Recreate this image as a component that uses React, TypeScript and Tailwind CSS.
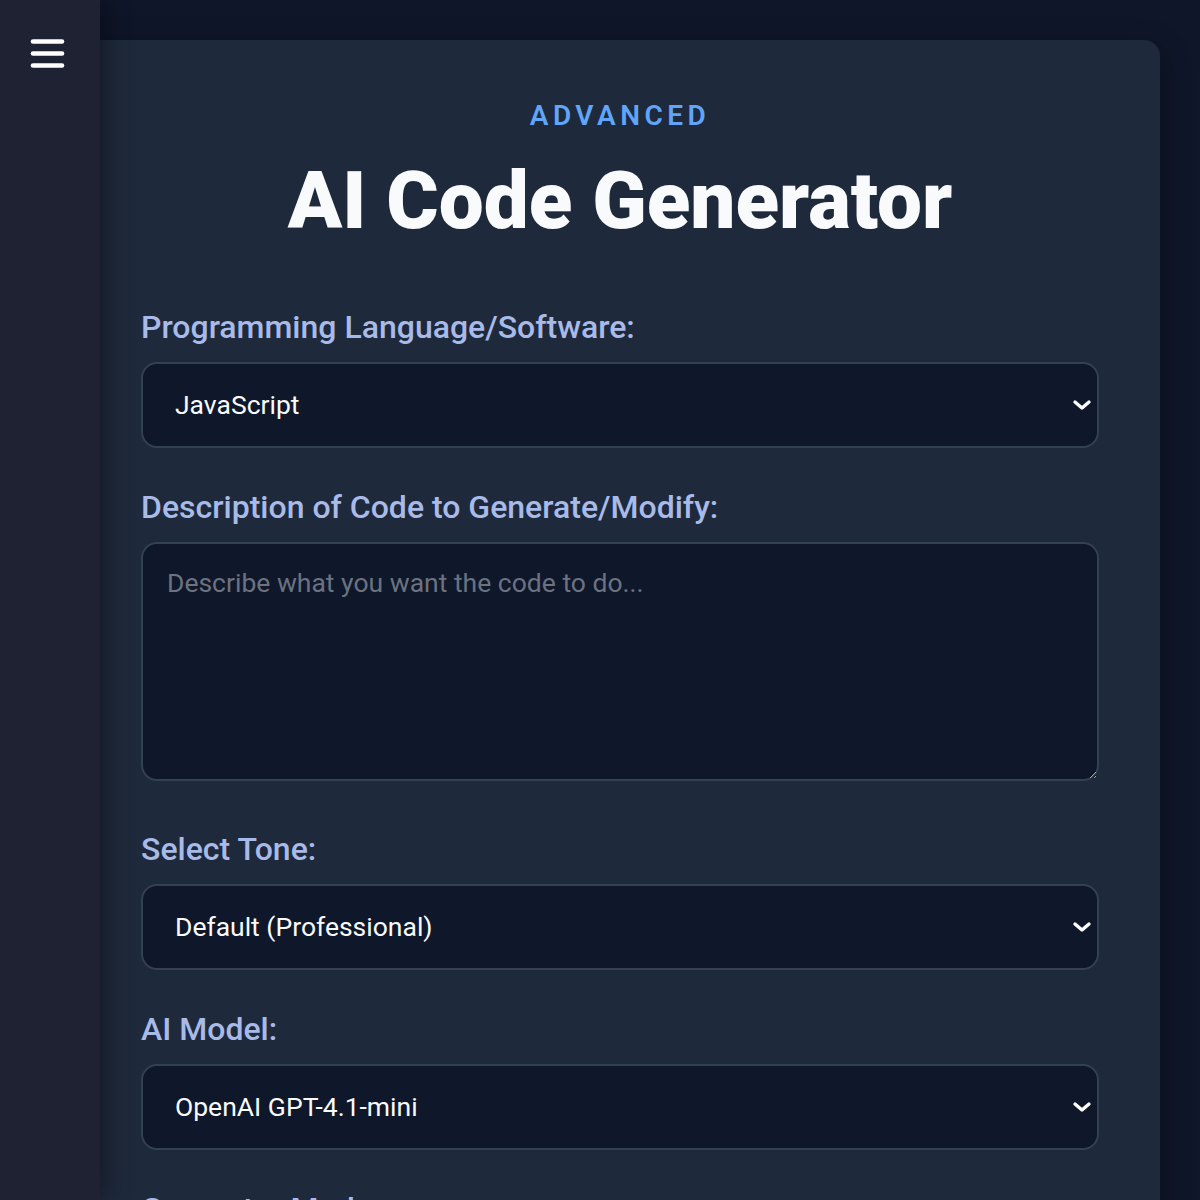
import React from 'react';

const font = { fontFamily: 'Roboto, "Noto Sans", sans-serif' };

const Chevron = () => (
  <svg
    className="pointer-events-none absolute right-[7px] top-1/2 -translate-y-1/2"
    width="20"
    height="14"
    viewBox="0 0 20 14"
    fill="none"
  >
    <path d="M3 4l7 6 7-6" stroke="#ffffff" strokeWidth="3.4" strokeLinecap="round" strokeLinejoin="round" />
  </svg>
);

const Field: React.FC<{ label: string; children: React.ReactNode }> = ({ label, children }) => (
  <div className="flex flex-col">
    <label className="mb-[17px] text-[32px] font-medium leading-[36px] text-[#a8bbe8]">{label}</label>
    {children}
  </div>
);

const Select: React.FC<{ value: string; options: string[] }> = ({ value, options }) => (
  <div className="relative">
    <select
      defaultValue={value}
      className="h-[86px] w-full appearance-none rounded-2xl border-2 border-[#334155] bg-[#0f172a] pl-[32px] pr-12 text-[26.5px] text-[#f8fafc] outline-none"
    >
      {options.map(o => (
        <option key={o}>{o}</option>
      ))}
    </select>
    <Chevron />
  </div>
);

export default function App() {
  return (
    <div className="min-h-[1200px] bg-[#0f1629]" style={font}>
      {/* sidebar */}
      <aside className="fixed left-0 top-0 z-10 h-full w-[100px] bg-[#1e2233] shadow-[6px_0_24px_rgba(0,0,0,0.35)]">
        <svg className="ml-[30px] mt-[37px]" width="35" height="33" viewBox="0 0 35 33" fill="none">
          <g stroke="#ffffff" strokeWidth="4.6" strokeLinecap="round">
            <line x1="3" y1="4.5" x2="32" y2="4.5" />
            <line x1="3" y1="16.5" x2="32" y2="16.5" />
            <line x1="3" y1="28.5" x2="32" y2="28.5" />
          </g>
        </svg>
      </aside>

      <main className="pl-[80px] pr-[40px] pt-[40px]">
        <div className="rounded-2xl bg-[#1e293b] px-[61px] pb-16 pt-[55px] shadow-[0_10px_30px_rgba(0,0,0,0.35)]">
          <div className="text-center">
            <p className="text-[28px] font-semibold uppercase leading-[42px] tracking-[0.16em] text-[#60a5fa]">Advanced</p>
            <h1 className="mt-[20px] text-[80px] font-black leading-[88px] text-[#f8fafc]">AI Code Generator</h1>
          </div>

          <div className="mt-[64px] flex flex-col gap-[41px]">
            <Field label="Programming Language/Software:">
              <Select value="JavaScript" options={['JavaScript', 'Python', 'TypeScript', 'Java', 'C#']} />
            </Field>
            <Field label="Description of Code to Generate/Modify:">
              <textarea
                placeholder="Describe what you want the code to do..."
                className="mb-[9px] block h-[239px] w-full resize-y rounded-2xl border-2 border-[#334155] bg-[#0f172a] px-[24px] py-[19px] text-[26.5px] text-[#f8fafc] placeholder:text-[#6b7280] outline-none [color-scheme:dark]"
              />
            </Field>
            <Field label="Select Tone:">
              <Select value="Default (Professional)" options={['Default (Professional)', 'Casual', 'Concise']} />
            </Field>
            <Field label="AI Model:">
              <Select value="OpenAI GPT-4.1-mini" options={['OpenAI GPT-4.1-mini', 'OpenAI GPT-4.1']} />
            </Field>
            <Field label="Generator Mode:">
              <Select value="Generate New Code" options={['Generate New Code', 'Modify Existing Code']} />
            </Field>
          </div>
        </div>
      </main>
    </div>
  );
}
